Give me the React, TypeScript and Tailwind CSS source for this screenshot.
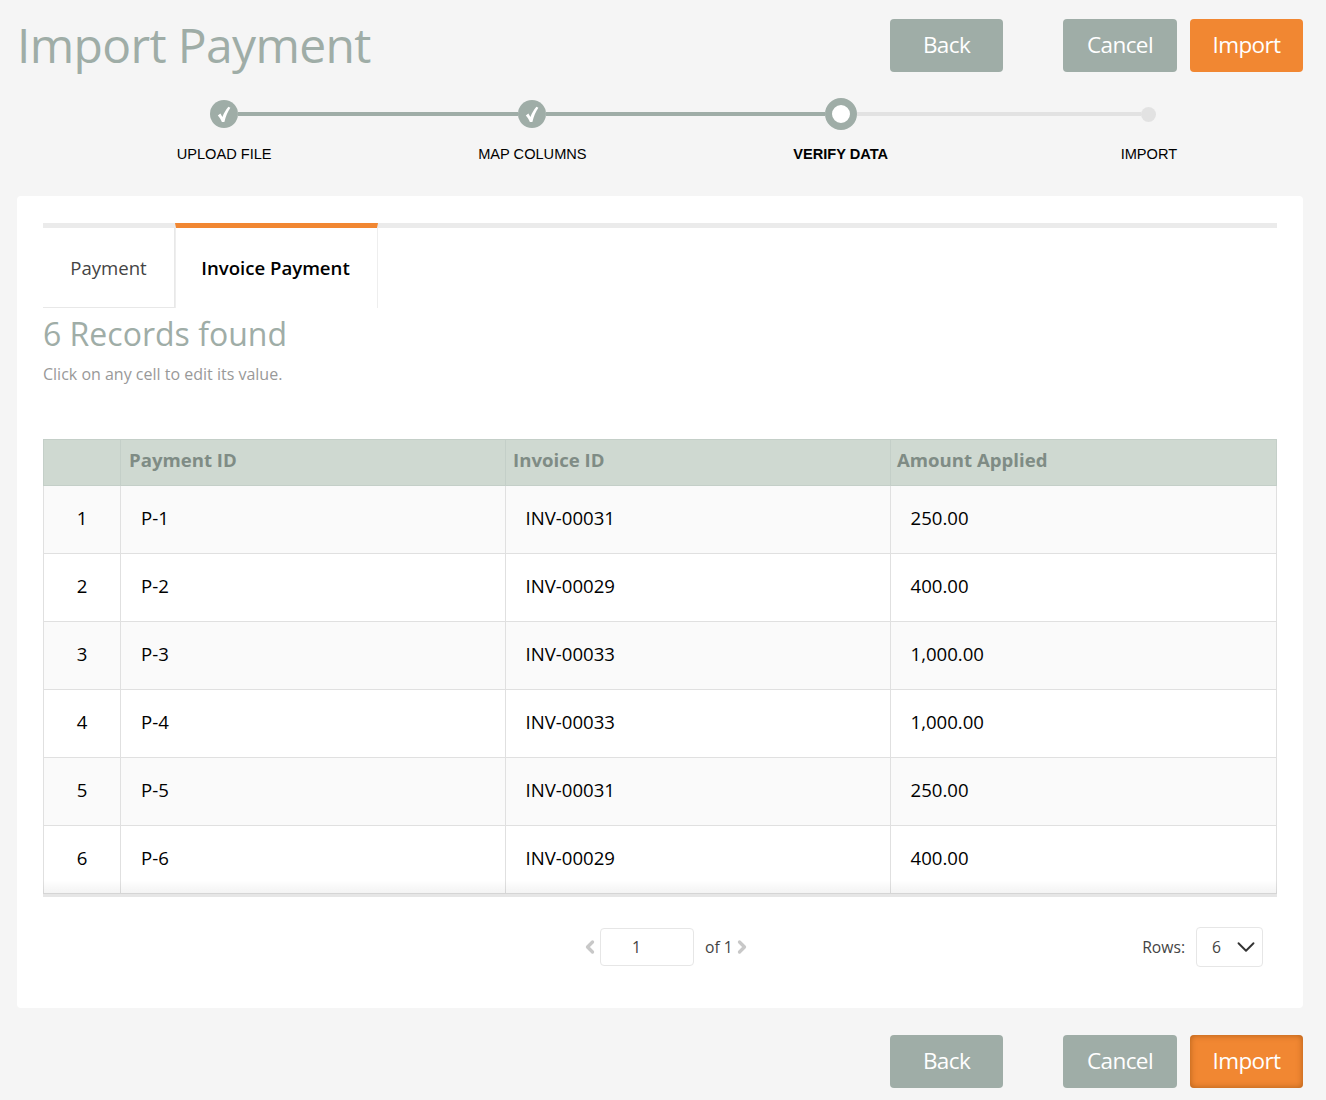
import { ChevronDown, ChevronLeft, ChevronRight } from 'lucide-react';

const ROWS = [
  { id: 'P-1', invoice: 'INV-00031', amount: '250.00' },
  { id: 'P-2', invoice: 'INV-00029', amount: '400.00' },
  { id: 'P-3', invoice: 'INV-00033', amount: '1,000.00' },
  { id: 'P-4', invoice: 'INV-00033', amount: '1,000.00' },
  { id: 'P-5', invoice: 'INV-00031', amount: '250.00' },
  { id: 'P-6', invoice: 'INV-00029', amount: '400.00' },
];

function Actions({ pressed }: { pressed?: boolean }) {
  return (
    <div className="flex justify-end text-[22.5px] tracking-[-0.6px] text-white">
      <button className="h-[53px] w-[113px] rounded bg-[#9fada7] pb-[2px]">Back</button>
      <button className="ml-[60px] h-[53px] w-[114px] rounded bg-[#9fada7] pb-[2px]">Cancel</button>
      <button
        className={`ml-[13px] h-[53px] w-[113px] rounded bg-[#f18732] pb-[2px] ${
          pressed ? 'shadow-[inset_0_0_6px_rgba(120,60,0,0.55)]' : ''
        }`}
      >
        Import
      </button>
    </div>
  );
}

function Step({ label, state, first, last }: { label: string; state: 'done' | 'current' | 'todo'; first?: boolean; last?: boolean }) {
  const leftLine = first ? 'bg-transparent' : state === 'todo' ? 'bg-[#e2e2e2]' : 'bg-[#9fada7]';
  const rightLine = last ? 'bg-transparent' : state === 'done' ? 'bg-[#9fada7]' : 'bg-[#e2e2e2]';
  return (
    <div className="flex flex-col items-center">
      <div className="flex h-8 w-full items-center">
        <div className={`h-1 flex-1 ${leftLine}`} />
        {state === 'done' && (
          <div className="flex size-7 items-center justify-center rounded-full bg-[#9fada7]">
            <svg width="14" height="17" viewBox="0 0 14 17" fill="#fff">
              <path d="M.8 9.4 3.4 7.6l2 3.3C7 7 8.900 3.600 11.400.8l2 1C10.800 5.600 8.800 10.200 7.400 16H4.900C3.900 13.400 2.500 11.200.8 9.400Z" />
            </svg>
          </div>
        )}
        {state === 'current' && <div className="size-8 rounded-full border-[7px] border-[#9fada7] bg-white" />}
        {state === 'todo' && <div className="size-[15px] rounded-full bg-[#e2e2e2]" />}
        <div className={`h-1 flex-1 ${rightLine}`} />
      </div>
      <div className={`mt-[14px] font-['Liberation_Sans',sans-serif] text-[14.6px] leading-[20px] text-black ${state === 'current' ? 'font-bold' : ''}`}>
        {label}
      </div>
    </div>
  );
}

export default function App() {
  return (
    <div className="h-[1100px] overflow-hidden bg-[#f5f5f5] font-['Open_Sans',sans-serif]">
      <div className="flex items-start justify-between pl-[17px] pr-[23px] pt-[19px]">
        <h1 className="text-[48px] leading-[51px] tracking-[-0.65px] text-[#9fada7]">Import Payment</h1>
        <Actions />
      </div>

      <div className="ml-[70px] mr-[23px] mt-[26px] grid grid-cols-4">
        <Step label="UPLOAD FILE" state="done" first />
        <Step label="MAP COLUMNS" state="done" />
        <Step label="VERIFY DATA" state="current" />
        <Step label="IMPORT" state="todo" last />
      </div>

      <div className="ml-[17px] mr-[23px] mt-[32px] h-[812px] rounded bg-white px-[26px] pt-[27px]">
        <div className="flex h-[85px] border-t-[5px] border-[#ebebeb]">
          <div className="flex h-[80px] w-[132px] items-center justify-center border-b border-r border-[#e8e8e8] text-[18.6px] text-[#444]">
            Payment
          </div>
          <div className="-mt-[5px] flex h-[85px] w-[203px] items-center justify-center border-x border-t-[5px] border-[#eeeeee] border-t-[#f18732] pr-[2px] text-[18.6px] font-semibold text-black">
            Invoice Payment
          </div>
        </div>

        <h2 className="mt-[3px] text-[32px] leading-[46px] text-[#9fada7]">6 Records found</h2>
        <p className="mt-[7px] text-[16px] leading-[20px] text-[#999999]">Click on any cell to edit its value.</p>

        <table className="mt-[55px] w-[1233px] table-fixed border-collapse text-[18.6px]">
          <colgroup>
            <col className="w-[77px]" />
            <col className="w-[385px]" />
            <col className="w-[385px]" />
            <col className="w-[386px]" />
          </colgroup>
          <thead>
            <tr className="h-[46px] bg-[#cfd9d1] text-left font-bold text-[#7f8c85]">
              <th className="border border-[#c4cfc8]" />
              <th className="border border-[#c4cfc8] pb-[6px] pl-[8px]">Payment ID</th>
              <th className="border border-[#c4cfc8] pb-[6px] pl-[7px]">Invoice ID</th>
              <th className="border border-[#c4cfc8] pb-[6px] pl-[6px]">Amount Applied</th>
            </tr>
          </thead>
          <tbody className="text-black">
            {ROWS.map((row, index) => (
              <tr key={row.id} className={`h-[68px] ${index % 2 === 0 ? 'bg-[#fafafa]' : 'bg-white'}`}>
                <td className="border border-[#e0e0e0] pb-[4px] text-center">{index + 1}</td>
                <td className="border border-[#e0e0e0] pb-[4px] pl-[20px]">{row.id}</td>
                <td className="border border-[#e0e0e0] pb-[4px] pl-[19.5px]">{row.invoice}</td>
                <td className="border border-[#e0e0e0] pb-[4px] pl-[19.5px]">{row.amount}</td>
              </tr>
            ))}
          </tbody>
        </table>
        <div className="relative h-[3px] w-[1234px] bg-[#e6e6e6]">
          <div className="absolute inset-x-0 bottom-full h-[14px] bg-gradient-to-b from-transparent to-black/5" />
        </div>

        <div className="mt-[30px] flex items-center justify-between pr-[14px] text-[15.7px] text-[#444]">
          <div className="ml-[537px] flex items-center">
            <ChevronLeft className="size-[20px] text-[#c8c8c8]" strokeWidth={4} />
            <div className="h-[38px] w-[94px] rounded border border-[#e6e6e6] pl-[31px] leading-[36px]">1</div>
            <span className="ml-[11px] pt-[2px]">of 1</span>
            <ChevronRight className="-ml-[1px] size-[20px] text-[#c8c8c8]" strokeWidth={4} />
          </div>
          <div className="flex items-center">
            <span className="pt-[2px]">Rows:</span>
            <div className="ml-[11px] flex h-10 w-[67px] items-center justify-between rounded border border-[#e6e6e6] pl-[15px] pr-[1px]">
              <span className="pt-[2px]">6</span>
              <ChevronDown className="size-[30px] text-[#333]" strokeWidth={1.5} />
            </div>
          </div>
        </div>
      </div>

      <div className="mt-[27px] pr-[23px]">
        <Actions pressed />
      </div>
    </div>
  );
}
